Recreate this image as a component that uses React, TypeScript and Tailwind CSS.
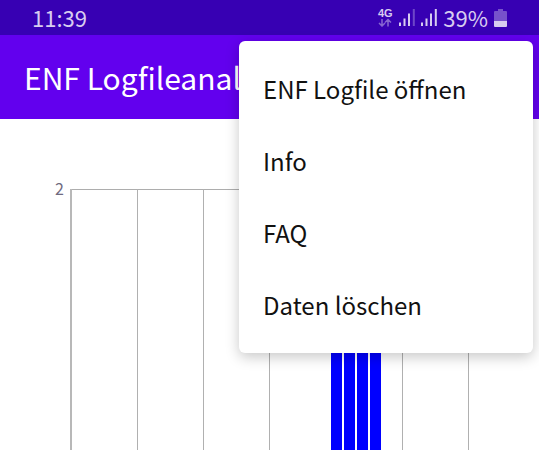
const gridLines = [137, 203, 269, 336, 402, 468];
const bars = [331, 344, 357, 370];
const menuItems = ['ENF Logfile öffnen', 'Info', 'FAQ', 'Daten löschen'];

function NetworkType() {
  return (
    <div className="flex w-4 flex-col items-center">
      <span className="font-['Liberation_Sans',sans-serif] text-[11px] leading-[10px] font-bold">4G</span>
      <svg width="14" height="9" viewBox="0 0 14 9" fill="none" stroke="currentColor" strokeWidth="1.5" opacity="0.5" aria-hidden="true">
        <path d="M4 1V8M1 5L4 8L7 5M10 8.5V1.5M7 4.5L10 1.5L13 4.5" />
      </svg>
    </div>
  );
}

function Signal({ full }: { full: boolean }) {
  return (
    <svg width="16" height="17" viewBox="0 0 16 17" fill="currentColor" aria-hidden="true">
      <rect x="0" y="13.5" width="2" height="3.5" />
      <rect x="4.5" y="9.5" width="2" height="7.5" />
      <rect x="9" y="4.5" width="2" height="12.5" />
      <rect x="13.8" y="0" width="2" height="17" opacity={full ? 1 : 0.35} />
    </svg>
  );
}

function Battery() {
  return (
    <svg width="13" height="18" viewBox="0 0 13 18" fill="currentColor" aria-hidden="true">
      <path d="M4 0H9V2H12Q13 2 13 3V12H0V3Q0 2 1 2H4Z" opacity="0.4" />
      <path d="M0 12H13V17Q13 18 12 18H1Q0 18 0 17Z" />
    </svg>
  );
}

function LogChart() {
  return (
    <svg className="block w-full" viewBox="0 0 539 331" shapeRendering="crispEdges" role="img" aria-label="Logfile">
      <text x="55" y="76" fontSize="16" fill="#6f6b80">2</text>
      <rect x="70" y="70" width="399" height="1" fill="#adadad" />
      {gridLines.map((x) => (
        <rect key={x} x={x} y="70" width="1" height="261" fill="#b0b0b0" />
      ))}
      <rect x="70" y="70" width="2" height="261" fill="#b8b8b8" />
      {bars.map((x) => (
        <rect key={x} x={x} y="70" width="11" height="261" fill="#0000ff" />
      ))}
    </svg>
  );
}

export default function App() {
  return (
    <div className="relative h-screen overflow-hidden bg-white font-['Noto_Sans_CJK_SC','Noto_Sans',sans-serif]">
      <div className="flex h-[35px] items-center justify-between bg-[#3700b3] px-8 text-[#d7ccf0]">
        <span className="text-[22px]">11:39</span>
        <div className="flex items-center gap-1.5">
          <NetworkType />
          <Signal full={false} />
          <Signal full />
          <span className="text-[22px]">39%</span>
          <Battery />
        </div>
      </div>
      <header className="flex h-[84px] items-center bg-[#6200ee] px-6">
        <h1 className="text-[30px] whitespace-nowrap text-white">ENF Logfileanal</h1>
      </header>
      <main>
        <LogChart />
      </main>
      <div role="menu" className="absolute top-[41px] right-1.5 flex w-[294px] flex-col rounded-md bg-white py-3 shadow-[0_4px_14px_rgba(0,0,0,0.22)]">
        {menuItems.map((label) => (
          <button key={label} type="button" role="menuitem" className="h-[72px] px-6 text-left text-2xl text-[#111111]">
            {label}
          </button>
        ))}
      </div>
    </div>
  );
}
